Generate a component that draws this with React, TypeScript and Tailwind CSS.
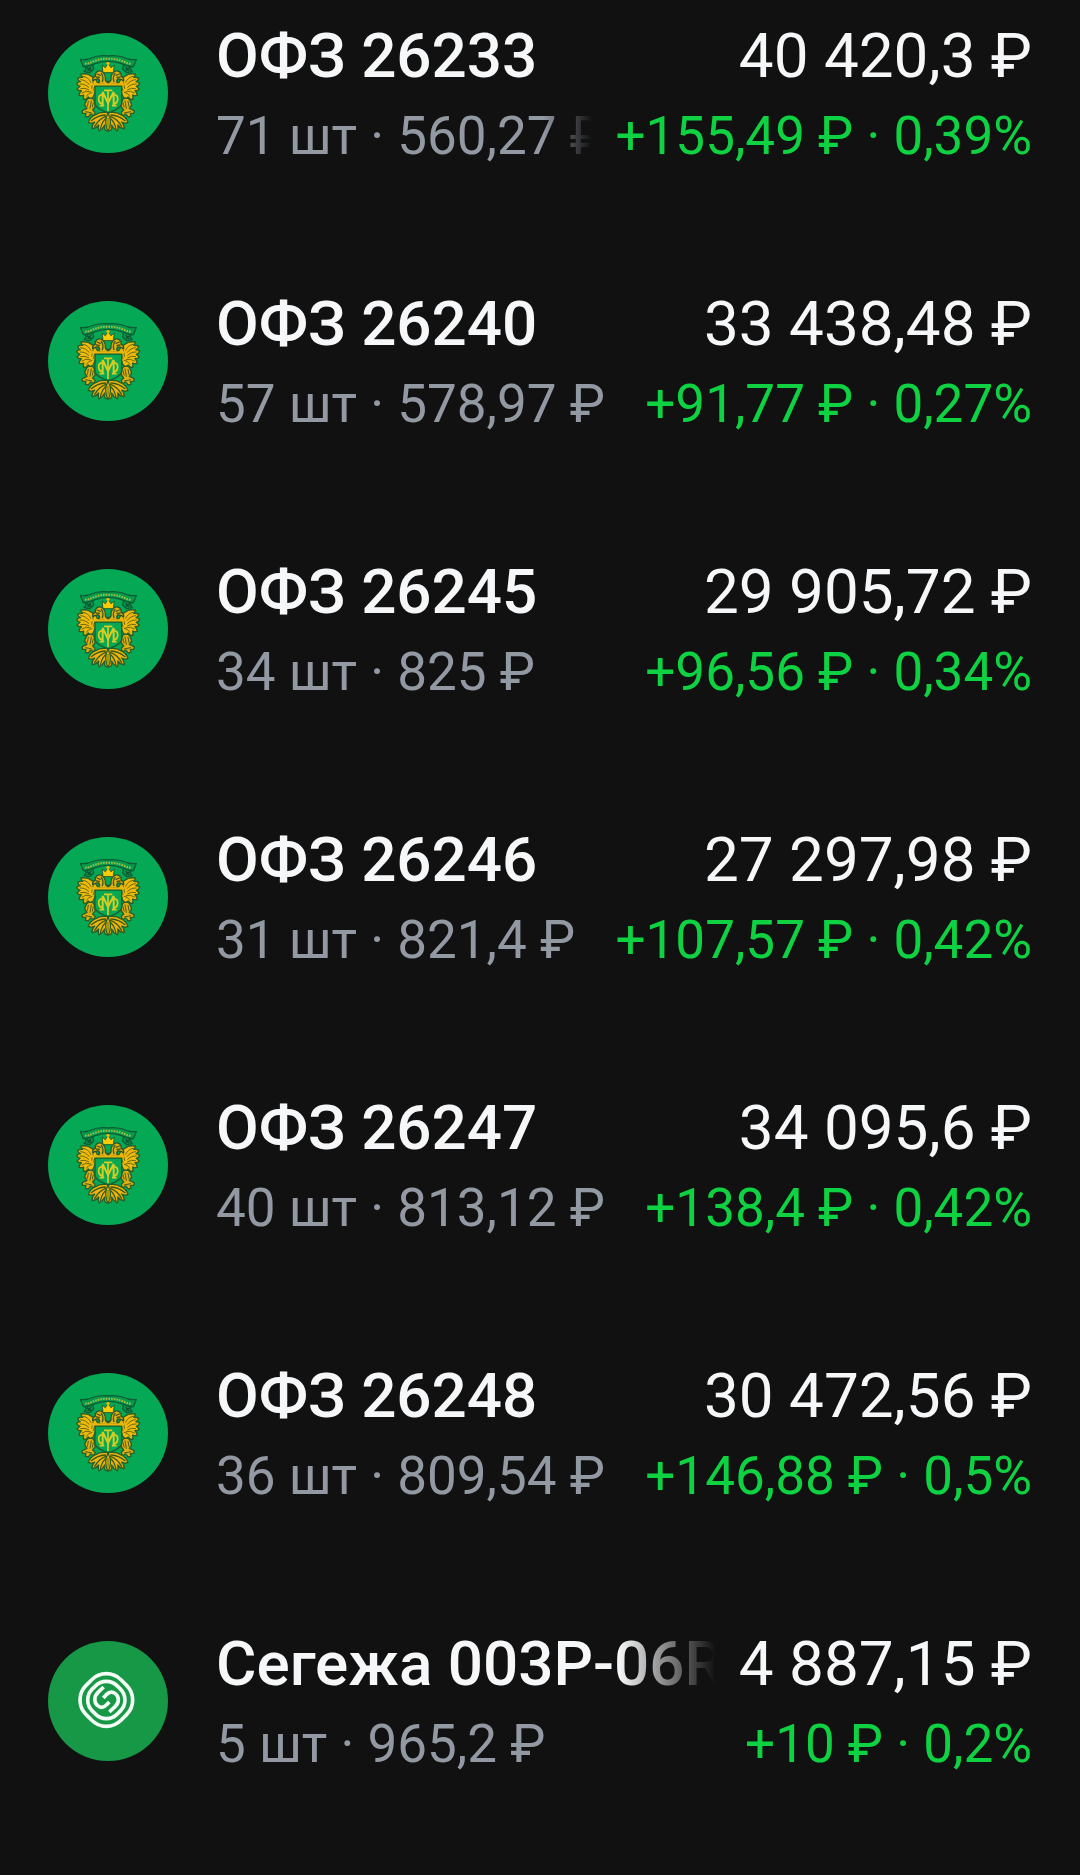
import React from "react";

type Position = {
  name: string;
  total: string;
  details: string;
  profit: string;
  logo: "ofz" | "segezha";
  fadeName?: boolean;
  fadeDetails?: boolean;
};

const positions: Position[] = [
  { name: "ОФЗ 26233", total: "40 420,3 ₽", details: "71 шт · 560,27 ₽", profit: "+155,49 ₽ · 0,39%", logo: "ofz", fadeDetails: true },
  { name: "ОФЗ 26240", total: "33 438,48 ₽", details: "57 шт · 578,97 ₽", profit: "+91,77 ₽ · 0,27%", logo: "ofz" },
  { name: "ОФЗ 26245", total: "29 905,72 ₽", details: "34 шт · 825 ₽", profit: "+96,56 ₽ · 0,34%", logo: "ofz" },
  { name: "ОФЗ 26246", total: "27 297,98 ₽", details: "31 шт · 821,4 ₽", profit: "+107,57 ₽ · 0,42%", logo: "ofz" },
  { name: "ОФЗ 26247", total: "34 095,6 ₽", details: "40 шт · 813,12 ₽", profit: "+138,4 ₽ · 0,42%", logo: "ofz" },
  { name: "ОФЗ 26248", total: "30 472,56 ₽", details: "36 шт · 809,54 ₽", profit: "+146,88 ₽ · 0,5%", logo: "ofz" },
  { name: "Сегежа 003P-06R", total: "4 887,15 ₽", details: "5 шт · 965,2 ₽", profit: "+10 ₽ · 0,2%", logo: "segezha", fadeName: true },
];

// One half of the eagle, mirrored for the other side
const EagleHalf = () => (
  <g strokeLinejoin="round" strokeLinecap="round">
    {/* wing */}
    <path
      d="M180 145 L160 147 L150 152 Q146 139 136 133 L121 124 Q110 121 99 123 Q99 129 104 133 Q95 132 89 136 Q90 143 97 146 Q90 147 86 151 Q89 158 96 160 Q90 163 87 169 Q93 174 100 173 Q94 179 93 187 Q101 189 107 186 Q105 193 107 200 Q116 199 121 192 L126 200 Q136 195 139 184 L143 172 V158 H180 Z"
      fill="#efba0c"
      stroke="#2a5f26"
      strokeWidth="4"
    />
    <path
      d="M106 130 Q122 133 128 148 M98 140 Q114 141 123 154 M96 153 Q112 152 122 163 M98 167 Q112 163 122 170 M102 180 Q113 171 127 176 M115 190 Q120 180 132 178 M136 143 L131 166 M142 155 L136 172"
      fill="none"
      stroke="#6b6a10"
      strokeWidth="3"
    />
    {/* neck and head */}
    <path
      d="M150 152 Q158 145 152 138 Q145 136 134 143 Q133 133 142 130 Q139 122 147 116 Q158 110 166 119 Q173 127 172 138 Q172 146 180 148 L180 154 Z"
      fill="#e2b20f"
      stroke="#2a5426"
      strokeWidth="4"
    />
    <path d="M147 123 L157 127 M160 121 Q168 132 163 146 M145 132 L154 133" fill="none" stroke="#43561a" strokeWidth="4" />
    {/* leg and claw */}
    <path
      d="M121 195 Q112 203 110 216 L117 226 L103 233 L103 241 L114 241 L112 250 L121 252 L127 243 L138 248 L141 238 L134 231 L141 222 Q143 205 133 196 Z"
      fill="#dcae10"
      stroke="#2a5f26"
      strokeWidth="4"
    />
    <path d="M121 205 L118 220 M130 204 L126 226 M113 236 L132 240 M136 209 L133 222" fill="none" stroke="#4c5c16" strokeWidth="3" />
    {/* tail feathers */}
    <path
      d="M174 238 Q155 236 143 245 Q126 252 121 268 Q131 273 140 267 Q131 276 132 287 Q145 286 152 276 Q149 284 153 294 Q164 289 170 276 Q168 289 174 293 L180 293 V238 Z"
      fill="#eab60d"
      stroke="#2a5f26"
      strokeWidth="4"
    />
    <path
      d="M172 246 Q149 247 130 263 M173 250 Q153 258 140 280 M175 255 Q161 267 157 288"
      fill="none"
      stroke="#3f5618"
      strokeWidth="4"
    />
  </g>
);

const OfzLogo = () => (
  <svg viewBox="0 0 360 360" className="size-full" aria-hidden="true">
    <rect width="360" height="360" fill="#04a855" />
    <EagleHalf />
    <g transform="translate(361 0) scale(-1 1)">
      <EagleHalf />
    </g>
    {/* central tail feather */}
    <path d="M180 240 Q166 268 180 296 Q195 268 180 240 Z" fill="#f4c408" stroke="#2a5f26" strokeWidth="4" strokeLinejoin="round" />
    <path d="M180 254 V284" stroke="#5b6a12" strokeWidth="3" />
    {/* shield */}
    <path d="M141 159 H221 V214 Q216 228 181 240 Q146 228 141 214 Z" fill="#04a855" stroke="#1d5e2c" strokeWidth="4" />
    <path d="M132 154 H229" stroke="#eab60d" strokeWidth="7" />
    {/* monogram */}
    <g fill="none" stroke="#dccb22">
      <path d="M164 218 V177 L180 210 L197 177 V218" strokeWidth="6" />
      <path d="M168 172 H193 M180 172 V234 M155 218 H169 M192 218 H206" strokeWidth="5" />
      <path d="M164 184 Q151 186 152 199 Q153 211 164 212 M197 184 Q210 186 209 199 Q208 211 197 212" strokeWidth="5" />
    </g>
    {/* crown */}
    <path
      d="M165 119 L162 96 L172 104 L180 91 L189 104 L199 96 L196 119 Z"
      fill="#f8ca08"
      stroke="#2a5f26"
      strokeWidth="3"
      strokeLinejoin="round"
    />
    <circle cx="180" cy="91" r="5" fill="#e9b90d" />
    {/* ribbon */}
    <g fill="#079a4c" stroke="#0d5c33" strokeWidth="4" strokeLinejoin="round">
      <path d="M108 98 L134 94 L137 108 L125 119 L108 116 L115 107 Z" />
      <path d="M253 98 L227 94 L224 108 L236 119 L253 116 L246 107 Z" />
      <path d="M97 79 Q110 81 121 78 Q151 64 181 69 Q211 64 241 78 Q252 81 265 79 L256 101 Q238 101 221 92 Q200 85 181 85 Q162 85 141 92 Q124 101 106 101 Z" />
    </g>
    <path d="M111 92 Q123 92 136 85 Q157 77 181 77 Q205 77 226 85 Q239 92 251 92" fill="none" stroke="#9cc044" strokeWidth="6" strokeDasharray="5 3" />
    <path d="M116 104 L129 112 M129 102 L119 114 M246 104 L233 112 M233 102 L243 114" stroke="#0f5230" strokeWidth="4" />
  </svg>
);

const SegezhaLogo = () => (
  <svg viewBox="0 0 360 360" className="size-full" aria-hidden="true">
    <rect width="360" height="360" fill="#179847" />
    <g fill="none" stroke="#f4fcf6" strokeWidth="11">
      <rect x="101" y="103" width="148" height="148" rx="62" transform="rotate(45 175 177)" />
      <rect x="122" y="124" width="106" height="106" rx="46" transform="rotate(45 175 177)" />
      <path d="M167 138 L150 154 C137 167 138 184 149 194 C159 202 169 199 176 191 L184 183" />
      <path d="M184 213 L202 196 C215 183 213 167 202 158 C192 150 182 154 176 160 L166 171" />
    </g>
  </svg>
);

const nameFade = "[mask-image:linear-gradient(to_right,black_calc(100%-96px),transparent)]";
const detailsFade = "[mask-image:linear-gradient(to_right,black_calc(100%-48px),transparent)]";

const PositionRow = ({ position }: { position: Position }) => (
  <li className="flex items-center gap-12">
    <div className="size-[120px] shrink-0 overflow-hidden rounded-full">
      {position.logo === "ofz" ? <OfzLogo /> : <SegezhaLogo />}
    </div>
    <div className="flex min-w-0 flex-1 flex-col gap-3 whitespace-nowrap">
      <div className="flex justify-between gap-6 text-[62px] leading-[74px] text-[#f6f7f8]">
        <h2 className={`min-w-0 overflow-hidden font-medium ${position.fadeName ? nameFade : ""}`}>{position.name}</h2>
        <p className="shrink-0">{position.total}</p>
      </div>
      <div className="flex justify-between gap-6 text-[53px] leading-[62px]">
        <p className={`min-w-0 overflow-hidden text-[#9299a2] ${position.fadeDetails ? detailsFade : ""}`}>{position.details}</p>
        <p className="shrink-0 text-[#0fd243]">{position.profit}</p>
      </div>
    </div>
  </li>
);

export default function App() {
  return (
    <main className="min-h-screen bg-[#111111] px-12 pt-[19px] pb-[100px] font-['Roboto',sans-serif]">
      <ul className="flex flex-col gap-[120px]">
        {positions.map((position) => (
          <PositionRow key={position.name} position={position} />
        ))}
      </ul>
    </main>
  );
}
